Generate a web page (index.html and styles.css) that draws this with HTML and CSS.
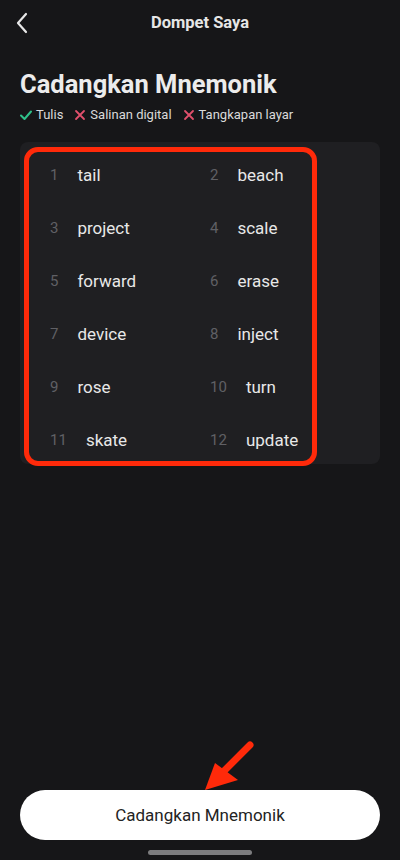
FILE: index.html
```html
<!DOCTYPE html>
<html lang="id">
<head>
<meta charset="utf-8">
<title>Dompet Saya</title>
<link rel="stylesheet" href="styles.css">
</head>
<body>
<div class="app">
  <header class="topbar">
    <svg class="back" width="14" height="22" viewBox="0 0 14 22"><polyline points="11,2 3,11 11,20" fill="none" stroke="#e8e8e8" stroke-width="2.2" stroke-linecap="round" stroke-linejoin="round"/></svg>
    <div class="title">Dompet Saya</div>
  </header>

  <h1 class="heading">Cadangkan Mnemonik</h1>
  <div class="legend">
    <span class="tag"><svg width="12" height="12" viewBox="0 0 12 12"><polyline points="1,6.5 4.5,10 11,2.5" fill="none" stroke="#2fc18a" stroke-width="2" stroke-linecap="round" stroke-linejoin="round"/></svg>Tulis</span>
    <span class="tag"><svg width="12" height="12" viewBox="0 0 12 12"><path d="M2 2 L10 10 M10 2 L2 10" stroke="#e2506c" stroke-width="1.8" stroke-linecap="round"/></svg>Salinan digital</span>
    <span class="tag"><svg width="12" height="12" viewBox="0 0 12 12"><path d="M2 2 L10 10 M10 2 L2 10" stroke="#e2506c" stroke-width="1.8" stroke-linecap="round"/></svg>Tangkapan layar</span>
  </div>

  <section class="card">
    <div class="grid">
      <div class="cell"><span class="num">1</span><span class="word">tail</span></div>
      <div class="cell"><span class="num">2</span><span class="word">beach</span></div>
      <div class="cell"><span class="num">3</span><span class="word">project</span></div>
      <div class="cell"><span class="num">4</span><span class="word">scale</span></div>
      <div class="cell"><span class="num">5</span><span class="word">forward</span></div>
      <div class="cell"><span class="num">6</span><span class="word">erase</span></div>
      <div class="cell"><span class="num">7</span><span class="word">device</span></div>
      <div class="cell"><span class="num">8</span><span class="word">inject</span></div>
      <div class="cell"><span class="num">9</span><span class="word">rose</span></div>
      <div class="cell"><span class="num">10</span><span class="word">turn</span></div>
      <div class="cell"><span class="num">11</span><span class="word">skate</span></div>
      <div class="cell"><span class="num">12</span><span class="word">update</span></div>
    </div>
    <div class="highlight"></div>
  </section>

  <div class="bottom">
    <button class="btn">Cadangkan Mnemonik</button>
    <svg class="arrow" width="70" height="60" viewBox="0 0 70 60"><line x1="60" y1="5" x2="30" y2="35" stroke="#ff2a0a" stroke-width="7" stroke-linecap="round"/><polygon points="15,50 25,23 48,40" fill="#ff2a0a"/></svg>
    <div class="home"></div>
  </div>
</div>
</body>
</html>
```

FILE: styles.css
```css
* { box-sizing: border-box; }
html, body { margin: 0; padding: 0; }
body {
  background: #161618;
  font-family: Roboto, "Noto Sans", "Liberation Sans", sans-serif;
  color: #e8e8e8;
}
.app {
  width: 400px;
  height: 860px;
  display: flex;
  flex-direction: column;
  position: relative;
}
.topbar {
  height: 44px;
  display: flex;
  align-items: center;
  justify-content: center;
  position: relative;
}
.back {
  position: absolute;
  left: 15px;
  top: 12px;
}
.title {
  font-size: 16.5px;
  font-weight: 700;
  color: #e6e6e6;
}
.heading {
  margin: 26px 0 0 20px;
  font-size: 25.5px;
  line-height: 28px;
  font-weight: 700;
  color: #ececec;
}
.legend {
  margin: 8px 0 0 20px;
  display: flex;
  gap: 11px;
  font-size: 13px;
  line-height: 18px;
  color: #dadada;
}
.tag {
  display: flex;
  align-items: center;
  gap: 4px;
}
.card {
  position: relative;
  margin: 18px 20px 0 20px;
  height: 322px;
  background: #1f1f22;
  border-radius: 8px;
  padding: 6px 0 0 30px;
}
.grid {
  display: grid;
  grid-template-columns: 160px 160px;
  grid-auto-rows: 53px;
}
.cell {
  display: flex;
  align-items: center;
}
.num {
  font-size: 15px;
  color: #606065;
  margin-right: 19px;
}
.word {
  font-size: 17px;
  color: #e8e8e8;
}
.highlight {
  position: absolute;
  left: 4px;
  top: 5px;
  width: 293px;
  height: 319px;
  border: 5px solid #ff2a0a;
  border-radius: 14px;
}
.bottom {
  margin-top: auto;
  position: relative;
  padding: 0 20px;
  display: flex;
  flex-direction: column;
  align-items: center;
}
.btn {
  width: 360px;
  height: 50px;
  border: none;
  border-radius: 25px;
  background: #ffffff;
  color: #232323;
  font-family: Roboto, "Noto Sans", "Liberation Sans", sans-serif;
  font-size: 17px;
}
.arrow {
  position: absolute;
  left: 190px;
  top: -50px;
}
.home {
  width: 104px;
  height: 5px;
  border-radius: 3px;
  background: #7c7c7e;
  margin: 10px 0 5px;
}
```
